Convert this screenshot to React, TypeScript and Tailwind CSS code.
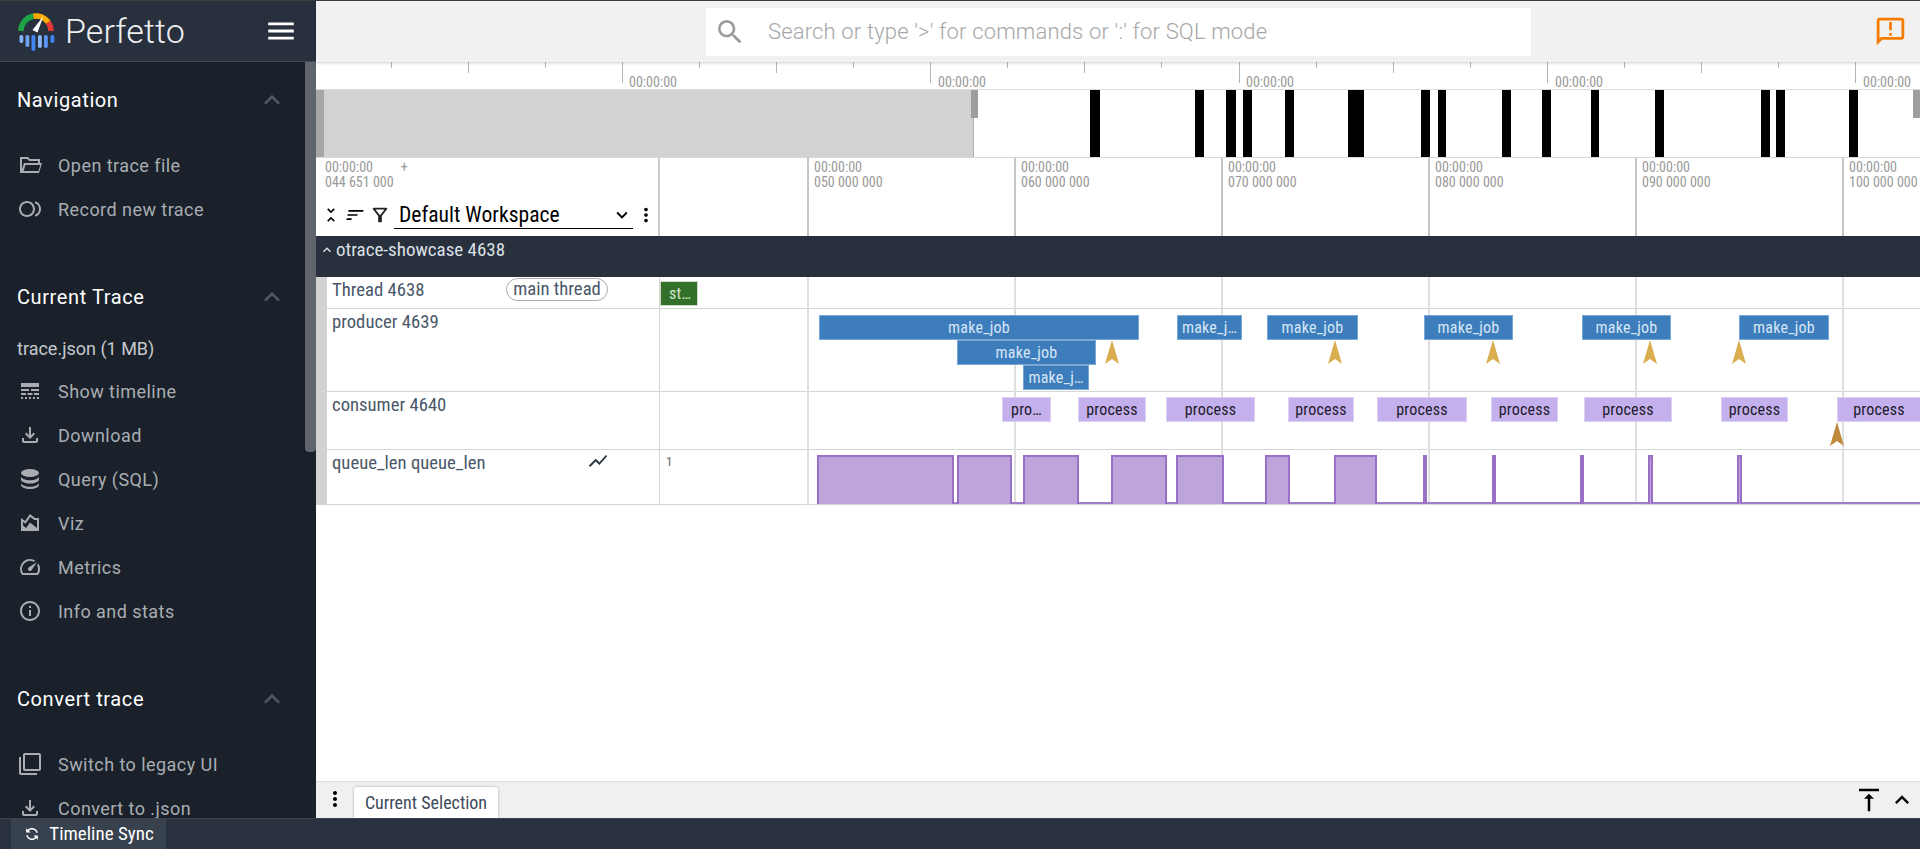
import React from "react";
import {
  MdOutlineFiberSmartRecord, MdLineStyle, MdOutlineFileDownload, MdOutlineAreaChart, MdSpeed, MdInfoOutline,
  MdFilterNone, MdExpandLess, MdExpandMore, MdMenu, MdSearch, MdOutlineAnnouncement, MdSync, MdUnfoldLess,
  MdSort, MdOutlineFilterAlt, MdMoreVert, MdVerticalAlignTop, MdShowChart,
} from "react-icons/md";

const DbIcon = () => (
  <svg width="28" height="28" viewBox="0 0 24 24" fill="currentColor">
    <ellipse cx="12" cy="6" rx="9" ry="4" />
    <path d="M3 9.2c0 2.2 4 4 9 4s9-1.800 9-4v3.400c0 2.200-4 4-9 4s-9-1.800-9-4z" />
    <path d="M3 15.800c0 2.200 4 4 9 4s9-1.800 9-4v2.200c0 2.200-4 4-9 4s-9-1.800-9-4z" />
  </svg>
);

const FolderIcon = () => (
  <svg width="30" height="30" viewBox="0 0 24 24" fill="currentColor" fillRule="evenodd">
    <path d="M2 4h8l2 2h10v4h2l-3 10H2zM4 6v10l2-6h14V8h-8.800l-2-2zM7.500 12l-1.800 6h14.800l1.800-6z" />
  </svg>
);

const Logo = () => (
  <svg width="38" height="40" viewBox="0 0 38 40" className="mt-[2px] shrink-0">
    <g fill="none" strokeWidth="5.5">
      <path d="M3 19A15 15 0 0 1 15.400 4.200" stroke="#1ea446" />
      <path d="M15.400 4.200A15 15 0 0 1 30.300 10.400" stroke="#f9ab00" />
      <path d="M30.300 10.400A15 15 0 0 1 33 19" stroke="#e53935" />
    </g>
    <polygon points="25.500,4 19.500,20.500 14.500,18" fill="#fff" />
    {[
      [1.500, 23, 8, "#8ab4f8"], [7.500, 23, 12, "#6fa3f5"], [13.500, 23, 16, "#4285f4"],
      [20, 23, 13, "#8ab4f8"], [26, 23, 13, "#5a94f5"], [32.500, 23, 8, "#4285f4"],
    ].map(([x, y, h, c], i) => (
      <rect key={i} x={x as number} y={y as number} width="3.800" height={h as number} rx="1.800" fill={c as string} />
    ))}
  </svg>
);

function SectionHead({ title }: { title: string }) {
  return (
    <div className="flex h-[44px] items-center justify-between pl-[17px] pr-[28px] text-[20px] tracking-[0.6px] text-white">
      <span>{title}</span>
      <MdExpandLess size={32} className="text-[#4e5763]" />
    </div>
  );
}

function Item({ icon, label }: { icon: React.ReactNode; label: string }) {
  return (
    <div className="flex h-[44px] items-center pl-[18px] text-[18px] tracking-[0.45px] text-[#a9adb2]">
      <span className="flex w-[24px] items-center justify-center">{icon}</span>
      <span className="ml-[16px]">{label}</span>
    </div>
  );
}

function Sidebar() {
  return (
    <aside className="relative flex h-full w-[316px] shrink-0 flex-col overflow-hidden bg-[#1a212b]">
      <div className="flex h-[61px] shrink-0 items-center border-b border-[#414a56] bg-[#28303d] pl-[18px]">
        <Logo />
        <span className="ml-[9px] text-[34px] font-light leading-none tracking-[0.1px] text-[#eef0f2]">Perfetto</span>
        <MdMenu size={34} className="ml-auto mr-[18px] text-white" />
      </div>
      <div className="pt-[16px]">
        <SectionHead title="Navigation" />
        <div className="mt-[21px]">
          <Item icon={<FolderIcon />} label="Open trace file" />
          <Item icon={<MdOutlineFiberSmartRecord size={28} />} label="Record new trace" />
        </div>
        <div className="mt-[44px]">
          <SectionHead title="Current Trace" />
          <div className="mt-[8px] flex h-[42px] items-center pl-[17px] font-stretch-[92%] text-[18px] text-[#c6c9cc]">trace.json (1 MB)</div>
          <Item icon={<MdLineStyle size={28} />} label="Show timeline" />
          <Item icon={<MdOutlineFileDownload size={28} />} label="Download" />
          <Item icon={<DbIcon />} label="Query (SQL)" />
          <Item icon={<MdOutlineAreaChart size={28} />} label="Viz" />
          <Item icon={<MdSpeed size={28} />} label="Metrics" />
          <Item icon={<MdInfoOutline size={26} />} label="Info and stats" />
        </div>
        <div className="mt-[44px]">
          <SectionHead title="Convert trace" />
          <div className="mt-[21px]">
            <Item icon={<MdFilterNone size={28} />} label="Switch to legacy UI" />
            <Item icon={<MdOutlineFileDownload size={28} />} label="Convert to .json" />
          </div>
        </div>
      </div>
      <div className="absolute right-0 top-[61px] h-[390px] w-[11px] rounded-b-sm bg-[#5f646d]" />
    </aside>
  );
}

const ovBars: [number, number][] = [
  [1090, 1100], [1195, 1204], [1226, 1236], [1243, 1252], [1285, 1294], [1348, 1364], [1421, 1430], [1438, 1446],
  [1502, 1511], [1542, 1551], [1591, 1599], [1655, 1664], [1761, 1770], [1776, 1785], [1849, 1858],
];
const M = 316;
const ticks: [number, number][] = [
  [391, 6], [468, 11], [545, 6], [622, 21], [699, 6], [776, 11], [853, 6], [930, 21], [1007, 6], [1084, 11], [1161, 6],
  [1239, 21], [1316, 6], [1393, 11], [1470, 6], [1547, 21], [1624, 6], [1701, 11], [1778, 6], [1855, 21],
];

function Overview() {
  return (
    <div className="relative h-[96px] shrink-0 border-b border-[#d8d8d8] bg-white">
      {ticks.map(([x, h]) => (
        <div key={x} className="absolute top-0 w-[1px] bg-[#b5b5b5]" style={{ left: x - M, height: h }} />
      ))}
      {[629, 938, 1246, 1555, 1863].map((x) => (
        <span key={x} className="absolute top-[13px] font-stretch-condensed text-[14px] leading-[14px] text-[#999]" style={{ left: x - M }}>
          00:00:00
        </span>
      ))}
      <div className="absolute left-0 right-0 top-[27px] h-[68px] border-t border-[#dcdcdc]">
        <div className="absolute bottom-0 left-0 top-0 w-[658px] bg-[#d2d2d2]" />
        <div className="absolute bottom-0 left-0 top-0 w-[8px] bg-[#a6a6a6]" />
        <div className="absolute bottom-0 left-[657px] top-0 w-[1px] bg-[#b0b0b0]" />
        <div className="absolute left-[655px] top-0 h-[28px] w-[7px] bg-[#9e9e9e]" />
        <div className="absolute right-0 top-0 h-[28px] w-[7px] bg-[#9e9e9e]" />
        {ovBars.map(([a, b]) => (
          <div key={a} className="absolute bottom-0 top-0 bg-black" style={{ left: a - M, width: b - a }} />
        ))}
      </div>
    </div>
  );
}

const majors = [808, 1015, 1222, 1429, 1636, 1843];
const labels = ["050 000 000", "060 000 000", "070 000 000", "080 000 000", "090 000 000", "100 000 000"];

function TimeHeader() {
  return (
    <div className="relative flex h-[78px] shrink-0 bg-white text-[#999]">
      <div className="relative w-[344px] shrink-0 border-r-2 border-[#ccc]">
        <div className="flex pl-[9px] pt-[2px] font-stretch-condensed text-[14px] leading-[15px]">
          <div>
            <div>00:00:00</div>
            <div>044 651 000</div>
          </div>
          <span className="ml-[7px]">+</span>
        </div>
        <div className="mt-[11px] flex items-center pl-[5px] text-black">
          <MdUnfoldLess size={20} />
          <MdSort size={20} className="ml-[4px] -skew-x-12" />
          <MdOutlineFilterAlt size={22} className="ml-[4px] text-[#222]" />
          <div className="ml-[3px] flex h-[28px] w-[239px] items-center justify-between border-b border-black pl-[5px] font-stretch-condensed text-[21.6px] leading-none">
            <span>Default Workspace</span>
            <MdExpandMore size={22} />
          </div>
          <MdMoreVert size={22} className="ml-[2px]" />
        </div>
      </div>
      <div className="w-[148px] shrink-0" />
      <div className="flex-1">
        {labels.map((l, i) => (
          <div key={l} className="absolute top-0 h-full border-l-2 border-[#c6c6c6] pl-[5px] pt-[2px] font-stretch-condensed text-[14px] leading-[15px]" style={{ left: majors[i] - M - 1 }}>
            <div>00:00:00</div>
            <div className="whitespace-nowrap">{l}</div>
          </div>
        ))}
      </div>
    </div>
  );
}

function Slice({ x0, x1, top, label, bg, fg, border }: { x0: number; x1: number; top: number; label: string; bg: string; fg: string; border: string }) {
  return (
    <div
      className="absolute flex h-[25px] items-center justify-center overflow-hidden border font-stretch-condensed text-[16px] leading-none tracking-[0.2px]"
      style={{ left: x0, width: x1 - x0, top, background: bg, color: fg, borderColor: border }}
    >
      {label}
    </div>
  );
}

const Arrow = ({ x, top, color }: { x: number; top: number; color: string }) => (
  <svg width="14" height="24" viewBox="0 0 14 24" className="absolute" style={{ left: x - 7, top }}>
    <polygon points="7,0 14,24 7,19 0,24" fill={color} />
  </svg>
);

const C0 = 808;
const blue = { bg: "#3d7dbc", fg: "#d6e6f5", border: "#7aa8d6" };
const purple = { bg: "#c3b0ec", fg: "#1f1b2b", border: "#dcd0f5" };
const prod: [number, number, number, string][] = [
  [819, 1139, 6, "make_job"], [957, 1096, 31, "make_job"], [1023, 1089, 56, "make_j…"], [1177, 1242, 6, "make_j…"],
  [1267, 1358, 6, "make_job"], [1424, 1513, 6, "make_job"], [1582, 1671, 6, "make_job"], [1739, 1829, 6, "make_job"],
];
const cons: [number, number, string][] = [
  [1002, 1051, "pro…"], [1078, 1146, "process"], [1166, 1255, "process"], [1288, 1354, "process"], [1377, 1467, "process"],
  [1491, 1558, "process"], [1584, 1672, "process"], [1721, 1788, "process"], [1837, 1921, "process"],
];
const counters: [number, number][] = [
  [817, 954], [957, 1012], [1023, 1079], [1111, 1167], [1176, 1224], [1265, 1290], [1334, 1377], [1423, 1425],
  [1492, 1496], [1580, 1584], [1648, 1653], [1737, 1742],
];

function Track({ h, title, extra, mid, children }: { h: string; title: string; extra?: React.ReactNode; mid?: React.ReactNode; children?: React.ReactNode }) {
  return (
    <div className={`flex ${h} border-b border-[#d6d6d6]`}>
      <div className="w-[11px] shrink-0 bg-[#d2d2d2]" />
      <div className="relative w-[333px] shrink-0 border-r border-[#d6d6d6] pl-[5px] font-stretch-condensed text-[18.7px] leading-[26px] text-[#4a5768]">
        {title}
        {extra}
      </div>
      <div className="relative w-[148px] shrink-0">{mid}</div>
      <div className="relative min-w-0 flex-1">{children}</div>
    </div>
  );
}

function Tracks() {
  return (
    <div className="relative shrink-0">
      <div className="flex h-[41px] bg-[#282f3d] text-[#dbe0e6]">
        <div className="flex h-[28px] w-[344px] shrink-0 items-center pl-[3px] font-stretch-condensed text-[19px]">
          <MdExpandLess size={16} />
          <span className="ml-[1px]">otrace-showcase 4638</span>
        </div>
      </div>
      <div className="relative">
        {majors.map((x) => (
          <div key={x} className="absolute bottom-0 top-0 w-[2px] bg-[#dfdfdf]" style={{ left: x - M - 1 }} />
        ))}
        <Track
          h="h-[32px]"
          title="Thread 4638"
          extra={
            <span className="absolute left-[179px] top-[1px] flex h-[23px] w-[102px] items-center justify-center rounded-full border border-[#aaa] text-[18.7px] leading-none">
              main thread
            </span>
          }
          mid={
            <div className="absolute left-0 top-[4px] flex h-[25px] w-[38px] items-center border border-[#cfdccb] bg-[#33702a] pl-[8px] font-stretch-condensed text-[16px] tracking-[0.2px] text-[#d3e4cc]">
              st…
            </div>
          }
        />
        <Track h="h-[83px]" title="producer 4639">
          {prod.map(([a, b, t, l], i) => (
            <Slice key={i} x0={a - C0} x1={b - C0} top={t} label={l} {...blue} />
          ))}
          {[1112, 1335, 1493, 1650, 1739].map((x) => (
            <Arrow key={x} x={x - C0} top={31} color="#d9ad50" />
          ))}
        </Track>
        <Track h="h-[58px]" title="consumer 4640">
          {cons.map(([a, b, l], i) => (
            <Slice key={i} x0={a - C0} x1={b - C0} top={5} label={l} {...purple} />
          ))}
          <Arrow x={1837 - C0} top={30} color="#c08a3e" />
        </Track>
        <Track
          h="h-[55px]"
          title="queue_len queue_len"
          extra={<MdShowChart size={22} className="absolute left-[260px] top-[0px] text-[#2d3644]" />}
          mid={<span className="absolute left-[6px] top-[2px] font-stretch-condensed text-[13px] text-[#666]">1</span>}
        >
          <div className="absolute bottom-0 left-[9px] right-0 h-[2px] bg-[#a07fca]" />
          {counters.map(([a, b]) => (
            <div key={a} className="absolute bottom-0 top-[5px] border-x-2 border-t-2 border-[#9a70c6] bg-[#bda4db]" style={{ left: a - C0, width: b - a }} />
          ))}
        </Track>
      </div>
    </div>
  );
}

function Main() {
  return (
    <main className="flex h-full min-w-0 flex-1 flex-col bg-white">
      <div className="z-10 flex h-[61px] shrink-0 items-center bg-[#f1f1f1] shadow-[0_1px_3px_rgba(0,0,0,0.2)]">
        <div className="ml-[390px] flex h-[48px] w-[825px] items-center bg-white pl-[8px] text-[#a7a7a7]">
          <MdSearch size={32} className="text-[#9a9a9a]" />
          <span className="ml-[22px] text-[22px] font-light tracking-[0.16px]">Search or type '&gt;' for commands or ':' for SQL mode</span>
        </div>
        <MdOutlineAnnouncement size={33} className="ml-auto mr-[13px] text-[#f57c00]" />
      </div>
      <Overview />
      <TimeHeader />
      <Tracks />
      <div className="flex-1" />
      <div className="flex h-[37px] shrink-0 items-end border-t border-[#dcdcdc] bg-[#f0f0f0]">
        <div className="flex h-full w-[38px] items-center justify-center pb-[2px] text-black">
          <MdMoreVert size={24} />
        </div>
        <div className="flex h-[31px] w-[144px] items-center justify-center rounded-t-[3px] bg-white font-stretch-condensed text-[18px] text-[#3d4a5c] shadow-[0_0_3px_rgba(0,0,0,0.3)]">
          Current Selection
        </div>
        <div className="ml-auto flex h-full items-center gap-[4px] pr-[4px] text-black">
          <MdVerticalAlignTop size={30} />
          <MdExpandLess size={28} />
        </div>
      </div>
    </main>
  );
}

export default function App() {
  return (
    <div className="flex h-[849px] w-[1920px] flex-col overflow-hidden border-t border-[#3c3c3c] font-['Roboto',sans-serif]">
      <div className="flex min-h-0 flex-1">
        <Sidebar />
        <Main />
      </div>
      <div className="flex h-[31px] shrink-0 items-stretch border-t border-[#3a4350] bg-[#29323e] pl-[11px]">
        <div className="flex w-[155px] items-center justify-center gap-[8px] bg-[#38414e] font-stretch-condensed text-[19px] text-white">
          <MdSync size={18} className="-rotate-45" />
          <span>Timeline Sync</span>
        </div>
      </div>
    </div>
  );
}
